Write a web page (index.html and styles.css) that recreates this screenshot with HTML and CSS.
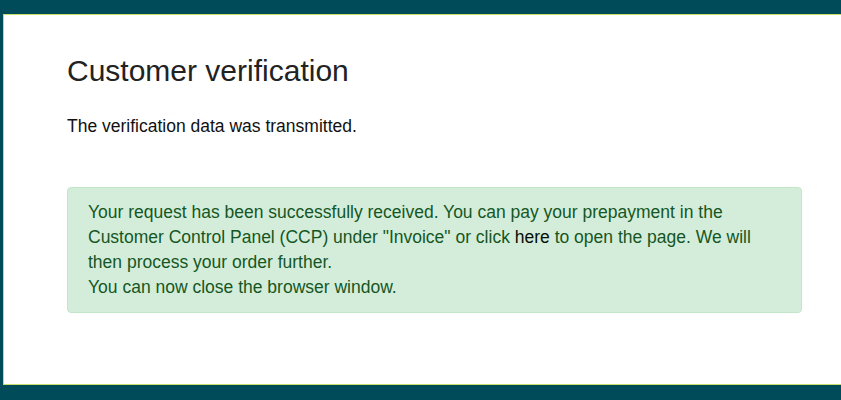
FILE: index.html
```html
<!DOCTYPE html>
<html>
  <head>
    <meta charset="UTF-8" />
    <title>Customer verification</title>
    <link rel="stylesheet" href="styles.css">
  </head>
  <body>
    <div class="page">
      <div class="content">
        <h2 class="page-title">Customer verification</h2>
        <p class="lead-text">The verification data was transmitted.</p>

        <div class="alert alert-success">
          Your request has been successfully received. You can pay your prepayment in the<br>
          Customer Control Panel (CCP) under "Invoice" or click <a href="#" class="alert-link">here</a> to open the page. We will<br>
          then process your order further.<br>
          You can now close the browser window.
        </div>
      </div>
    </div>
  </body>
</html>
```

FILE: styles.css
```css
html, body {
  margin: 0;
  height: 100%;
}

body {
  background: #004b5a;
  color: #212529;
  font-family: "Liberation Sans", Arial, sans-serif;
  overflow: hidden;
}

/* white sheet with the thin lime border */
.page {
  box-sizing: border-box;
  height: calc(100vh - 29px);
  margin: 14px 0 15px 3px;
  background: #fff;
  border: 1px solid #c6df6b;
  border-right: 0;
}

.content {
  padding: 38px 39px 0 63px;
}

.page-title {
  margin: 0;
  font-size: 30px;
  font-weight: normal;
  line-height: 36px;
  color: #222;
}

.lead-text {
  margin: 25px 0 0 0;
  font-size: 17.5px;
  line-height: 25px;
  color: #111;
}

.alert {
  margin-top: 48px;
  padding: 12px 20px;
  border: 1px solid #c3e6cb;
  border-radius: 4px;
  font-size: 17.5px;
  line-height: 25px;
}

.alert-success {
  background: #d4edda;
  color: #155724;
}

.alert-link {
  color: #050f07;
  text-decoration: none;
}
```
